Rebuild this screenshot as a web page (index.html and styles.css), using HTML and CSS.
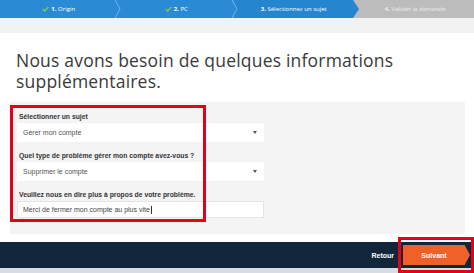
FILE: index.html
```html
<!DOCTYPE html>
<html lang="fr">
<head>
<meta charset="utf-8">
<link rel="stylesheet" href="styles.css">
</head>
<body>
<div class="steps">
  <div class="step done">
    <span><svg class="check" viewBox="0 0 10 8" width="7" height="6"><path d="M1 4.5 L3.8 7 L9 1" fill="none" stroke="#7fd13b" stroke-width="2"/></svg><b>1.</b> Origin</span>
    <svg class="sep" viewBox="0 0 8 18" width="8" height="18"><path d="M1 0 L6 9 L1 18" fill="none" stroke="#6fb6ea" stroke-width="1"/></svg>
  </div>
  <div class="step done">
    <span><svg class="check" viewBox="0 0 10 8" width="7" height="6"><path d="M1 4.5 L3.8 7 L9 1" fill="none" stroke="#7fd13b" stroke-width="2"/></svg><b>2.</b> PC</span>
    <svg class="sep" viewBox="0 0 8 18" width="8" height="18"><path d="M1 0 L6 9 L1 18" fill="none" stroke="#6fb6ea" stroke-width="1"/></svg>
  </div>
  <div class="step current">
    <span><b>3.</b> Sélectionnez un sujet</span>
    <svg class="tip" viewBox="0 0 6 18" width="6" height="18"><path d="M0 0 L6 9 L0 18 Z" fill="#2585cf"/></svg>
  </div>
  <div class="step todo">
    <span><b>4.</b> Valider la demande</span>
  </div>
</div>
<div class="band"></div>

<h1 class="title">Nous avons besoin de quelques informations supplémentaires.</h1>

<div class="panel">
  <div class="field">
    <div class="label">Sélectionner un sujet</div>
    <div class="control select">Gérer mon compte<span class="caret"></span></div>
  </div>
  <div class="field">
    <div class="label">Quel type de problème gérer mon compte avez-vous ?</div>
    <div class="control select">Supprimer le compte<span class="caret"></span></div>
  </div>
  <div class="field">
    <div class="label">Veuillez nous en dire plus à propos de votre problème.</div>
    <div class="control input">Merci de fermer mon compte au plus vite<span class="cursor"></span></div>
  </div>
  <div class="mark mark-form"></div>
</div>

<div class="footer">
  <span class="back">Retour</span>
  <span class="next">Suivant</span>
  <div class="mark mark-next"></div>
</div>
<div class="strip"></div>
</body>
</html>
```
FILE: styles.css
```css
html, body {
  margin: 0;
  padding: 0;
  background: #ffffff;
  width: 474px;
  height: 273px;
  overflow: hidden;
  font-family: "Liberation Sans", Arial, sans-serif;
}

.steps {
  display: flex;
  height: 18px;
  background: #2a8ad3;
  color: #ffffff;
  font-family: "Open Sans", sans-serif;
  font-size: 6px;
}
.step {
  flex: 1;
  position: relative;
  display: flex;
  align-items: center;
  justify-content: center;
}
.step b { font-weight: 700; }
.step.current { background: #2585cf; }
.step.todo { background: #bcbcbc; color: #eeeeee; padding-left: 4px; }
.check { margin-right: 2px; vertical-align: -1px; }
.sep { position: absolute; right: -4px; top: 0; z-index: 1; }
.tip { position: absolute; right: -6px; top: 0; z-index: 1; }

.band {
  height: 15px;
  background: #f2f2f2;
}

.title {
  margin: 17px 10px 0 16px;
  font-family: "Open Sans", sans-serif;
  font-weight: 400;
  font-size: 17.5px;
  line-height: 21px;
  color: #3a3a3a;
  letter-spacing: 0.2px;
}

.panel {
  position: relative;
  margin: 10px 9px 0 10px;
  background: #f4f4f4;
  padding: 10px 7px 16px 7px;
  display: flex;
  flex-direction: column;
  gap: 9px;
}
.field {
  display: flex;
  flex-direction: column;
  gap: 2px;
}
.label {
  font-size: 6.8px;
  line-height: 9px;
  font-weight: 700;
  color: #333333;
  padding-left: 2px;
}
.control {
  width: 247px;
  box-sizing: border-box;
  background: #ffffff;
  font-size: 7px;
  color: #555555;
  padding-left: 6px;
  display: flex;
  align-items: center;
  position: relative;
}
.select { height: 19px; }
.input { height: 17px; border: 1px solid #e4e4e4; padding-left: 5px; color: #444; }
.caret {
  position: absolute;
  right: 7px;
  top: 8px;
  width: 0;
  height: 0;
  border-left: 2.5px solid transparent;
  border-right: 2.5px solid transparent;
  border-top: 3px solid #555555;
}
.cursor {
  display: inline-block;
  width: 1px;
  height: 8px;
  background: #333;
  margin-left: 1px;
}

.mark {
  position: absolute;
  border: 3px solid #e3001b;
  box-sizing: border-box;
  pointer-events: none;
}
.mark-form {
  left: 0px;
  top: 3px;
  width: 196px;
  height: 117px;
}

.footer {
  position: relative;
  margin-top: 8px;
  height: 26px;
  background: #12263a;
  display: flex;
  align-items: center;
  justify-content: flex-end;
  padding-right: 4px;
}
.back {
  color: #ffffff;
  font-size: 7px;
  font-weight: 700;
  margin-right: 9px;
}
.next {
  width: 67px;
  height: 20px;
  box-sizing: border-box;
  padding-right: 5px;
  background: #ef6128;
  clip-path: polygon(0 0, 92% 0, 100% 50%, 92% 100%, 0 100%);
  color: #ffffff;
  font-size: 7px;
  font-weight: 700;
  display: flex;
  align-items: center;
  justify-content: center;
}
.mark-next {
  right: 0;
  top: -5px;
  width: 76px;
  height: 36px;
}

.strip {
  height: 5px;
  background: #d7dde2;
}
```
